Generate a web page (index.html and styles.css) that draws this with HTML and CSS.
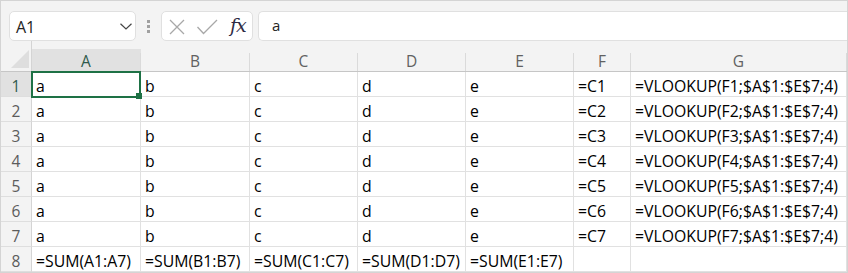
FILE: index.html
```html
<!DOCTYPE html>
<html>
<head>
<meta charset="utf-8">
<link rel="stylesheet" href="styles.css">
</head>
<body>
<div class="app">
  <div class="toolbar">
    <div class="namebox">
      <span class="name">A1</span>
      <svg class="chev" width="12" height="7" viewBox="0 0 12 7"><path d="M0.5 0.8 L6 6 L11.5 0.8" fill="none" stroke="#444" stroke-width="1.2"/></svg>
    </div>
    <div class="dots"><i></i><i></i><i></i></div>
    <div class="fxbox">
      <svg class="ico" width="16" height="16" viewBox="0 0 16 16"><path d="M1 1 L15 15 M15 1 L1 15" stroke="#a8a8a8" stroke-width="1.3" fill="none"/></svg>
      <svg class="ico" width="21" height="16" viewBox="0 0 21 16"><path d="M0.5 8 L6.5 14.5 L20 1" stroke="#a8a8a8" stroke-width="1.3" fill="none"/></svg>
      <span class="fx">fx</span>
    </div>
    <div class="input">a</div>
  </div>
  <div class="grid">
    <div class="corner"><svg width="30" height="30" viewBox="0 0 30 30"><polygon points="10,27 28,27 28,9" fill="#dedede"/></svg></div>
    <div class="ch sel"><div class="chi"><div class="chl">A</div></div></div>
    <div class="ch"><div class="chi"><div class="chl">B</div></div></div>
    <div class="ch"><div class="chi"><div class="chl">C</div></div></div>
    <div class="ch"><div class="chi"><div class="chl">D</div></div></div>
    <div class="ch"><div class="chi"><div class="chl">E</div></div></div>
    <div class="ch"><div class="chi"><div class="chl">F</div></div></div>
    <div class="ch"><div class="chi"><div class="chl">G</div></div></div>

    <div class="rh sel">1</div><div class="c active">a<span class="handle"></span></div><div class="c">b</div><div class="c">c</div><div class="c">d</div><div class="c">e</div><div class="c">=C1</div><div class="c">=VLOOKUP(F1;$A$1:$E$7;4)</div>
    <div class="rh">2</div><div class="c">a</div><div class="c">b</div><div class="c">c</div><div class="c">d</div><div class="c">e</div><div class="c">=C2</div><div class="c">=VLOOKUP(F2;$A$1:$E$7;4)</div>
    <div class="rh">3</div><div class="c">a</div><div class="c">b</div><div class="c">c</div><div class="c">d</div><div class="c">e</div><div class="c">=C3</div><div class="c">=VLOOKUP(F3;$A$1:$E$7;4)</div>
    <div class="rh">4</div><div class="c">a</div><div class="c">b</div><div class="c">c</div><div class="c">d</div><div class="c">e</div><div class="c">=C4</div><div class="c">=VLOOKUP(F4;$A$1:$E$7;4)</div>
    <div class="rh">5</div><div class="c">a</div><div class="c">b</div><div class="c">c</div><div class="c">d</div><div class="c">e</div><div class="c">=C5</div><div class="c">=VLOOKUP(F5;$A$1:$E$7;4)</div>
    <div class="rh">6</div><div class="c">a</div><div class="c">b</div><div class="c">c</div><div class="c">d</div><div class="c">e</div><div class="c">=C6</div><div class="c">=VLOOKUP(F6;$A$1:$E$7;4)</div>
    <div class="rh">7</div><div class="c">a</div><div class="c">b</div><div class="c">c</div><div class="c">d</div><div class="c">e</div><div class="c">=C7</div><div class="c">=VLOOKUP(F7;$A$1:$E$7;4)</div>
    <div class="rh">8</div><div class="c">=SUM(A1:A7)</div><div class="c">=SUM(B1:B7)</div><div class="c">=SUM(C1:C7)</div><div class="c">=SUM(D1:D7)</div><div class="c">=SUM(E1:E7)</div><div class="c"></div><div class="c"></div>
  </div>
</div>
</body>
</html>
```
FILE: styles.css
```css
* { box-sizing: border-box; }
html, body { margin: 0; padding: 0; background: #fff; }
body { width: 848px; height: 273px; overflow: hidden; font-family: "Open Sans", "Noto Sans", sans-serif; }

.app {
  width: 848px;
  height: 273px;
  border: 1px solid #d4d4d4;
  background: #f3f3f3;
  display: flex;
  flex-direction: column;
  overflow: hidden;
}

.toolbar {
  height: 40px;
  flex: none;
  display: flex;
  align-items: flex-start;
  padding: 10px 0 0 8px;
}

.namebox {
  width: 127px;
  height: 30px;
  background: #fff;
  border: 1px solid #e0e0e0;
  border-radius: 5px;
  display: flex;
  align-items: center;
  justify-content: space-between;
  padding: 0 3px 0 6px;
}
.name { font-size: 16px; color: #242424; line-height: 20px; margin-top: 1px; }
.chev { margin-right: 0; margin-top: 1px; }

.dots {
  width: 3px;
  margin: 9px 11px 0 11px;
  display: flex;
  flex-direction: column;
  gap: 2px;
}
.dots i { display: block; width: 3px; height: 3px; background: #a0a0a0; }

.fxbox {
  width: 92px;
  height: 30px;
  background: #fff;
  border: 1px solid #e0e0e0;
  border-radius: 5px;
  display: flex;
  align-items: center;
  padding: 0 0 0 7px;
}
.fxbox .ico:first-child { margin-right: 12px; margin-top: 1px; }
.fxbox .ico:nth-child(2) { margin-right: 12px; margin-top: 1px; }
.fx {
  font-family: "DejaVu Serif", "Liberation Serif", serif;
  font-style: italic;
  font-size: 19px;
  color: #2e2a44;
  line-height: 20px;
  letter-spacing: -1px;
  margin-top: -2px;
}

.input {
  flex: 1;
  height: 30px;
  margin-left: 5px;
  background: #fff;
  border: 1px solid #e0e0e0;
  border-right: none;
  border-radius: 5px 0 0 5px;
  padding: 0 0 0 13px;
  font-size: 15px;
  line-height: 27px;
  color: #242424;
}

.grid {
  display: grid;
  grid-template-columns: 31px 109px 109px 108px 108px 108px 57px 216px;
  grid-template-rows: 31px repeat(8, 25px);
  background: #fff;
}

.corner {
  background: #f3f3f3;
  border-bottom: 1px solid #c6c6c6;
  border-right: 1px solid #d4d4d4;
  overflow: hidden;
}
.corner svg { display: block; }

.ch {
  background: #f3f3f3;
  border-bottom: 1px solid #c6c6c6;
  padding-top: 8px;
}
.chi {
  height: 22px;
  display: flex;
  flex-direction: column;
  justify-content: flex-end;
}
.ch.sel .chi { background: #e1e1e1; }
.chl {
  height: 18px;
  border-right: 1px solid #dadada;
  text-align: center;
  font-size: 15.5px;
  line-height: 16px;
  color: #616161;
}
.ch.sel .chl { color: #2f5a4c; }

.rh {
  background: #f3f3f3;
  border-right: 1px solid #d4d4d4;
  border-bottom: 1px solid #dedede;
  text-align: center;
  font-size: 15.5px;
  line-height: 21px;
  padding-top: 4px;
  color: #5c5c5c;
}
.rh.sel { background: #e1e1e1; color: #2f5a4c; }

.c {
  border-right: 1px solid #e1e1e1;
  border-bottom: 1px solid #e1e1e1;
  padding: 4px 0 0 4px;
  font-size: 15.8px;
  line-height: 21px;
  color: #000;
  white-space: nowrap;
  overflow: hidden;
}
.c.active {
  position: relative;
  overflow: visible;
}
.c.active::after {
  content: "";
  position: absolute;
  left: -1px;
  top: -1px;
  right: -1px;
  bottom: -2px;
  border: 2px solid #1e7145;
  pointer-events: none;
}
.handle {
  position: absolute;
  right: -2px;
  bottom: -3px;
  width: 6px;
  height: 6px;
  background: #1e7145;
  z-index: 2;
}
```
